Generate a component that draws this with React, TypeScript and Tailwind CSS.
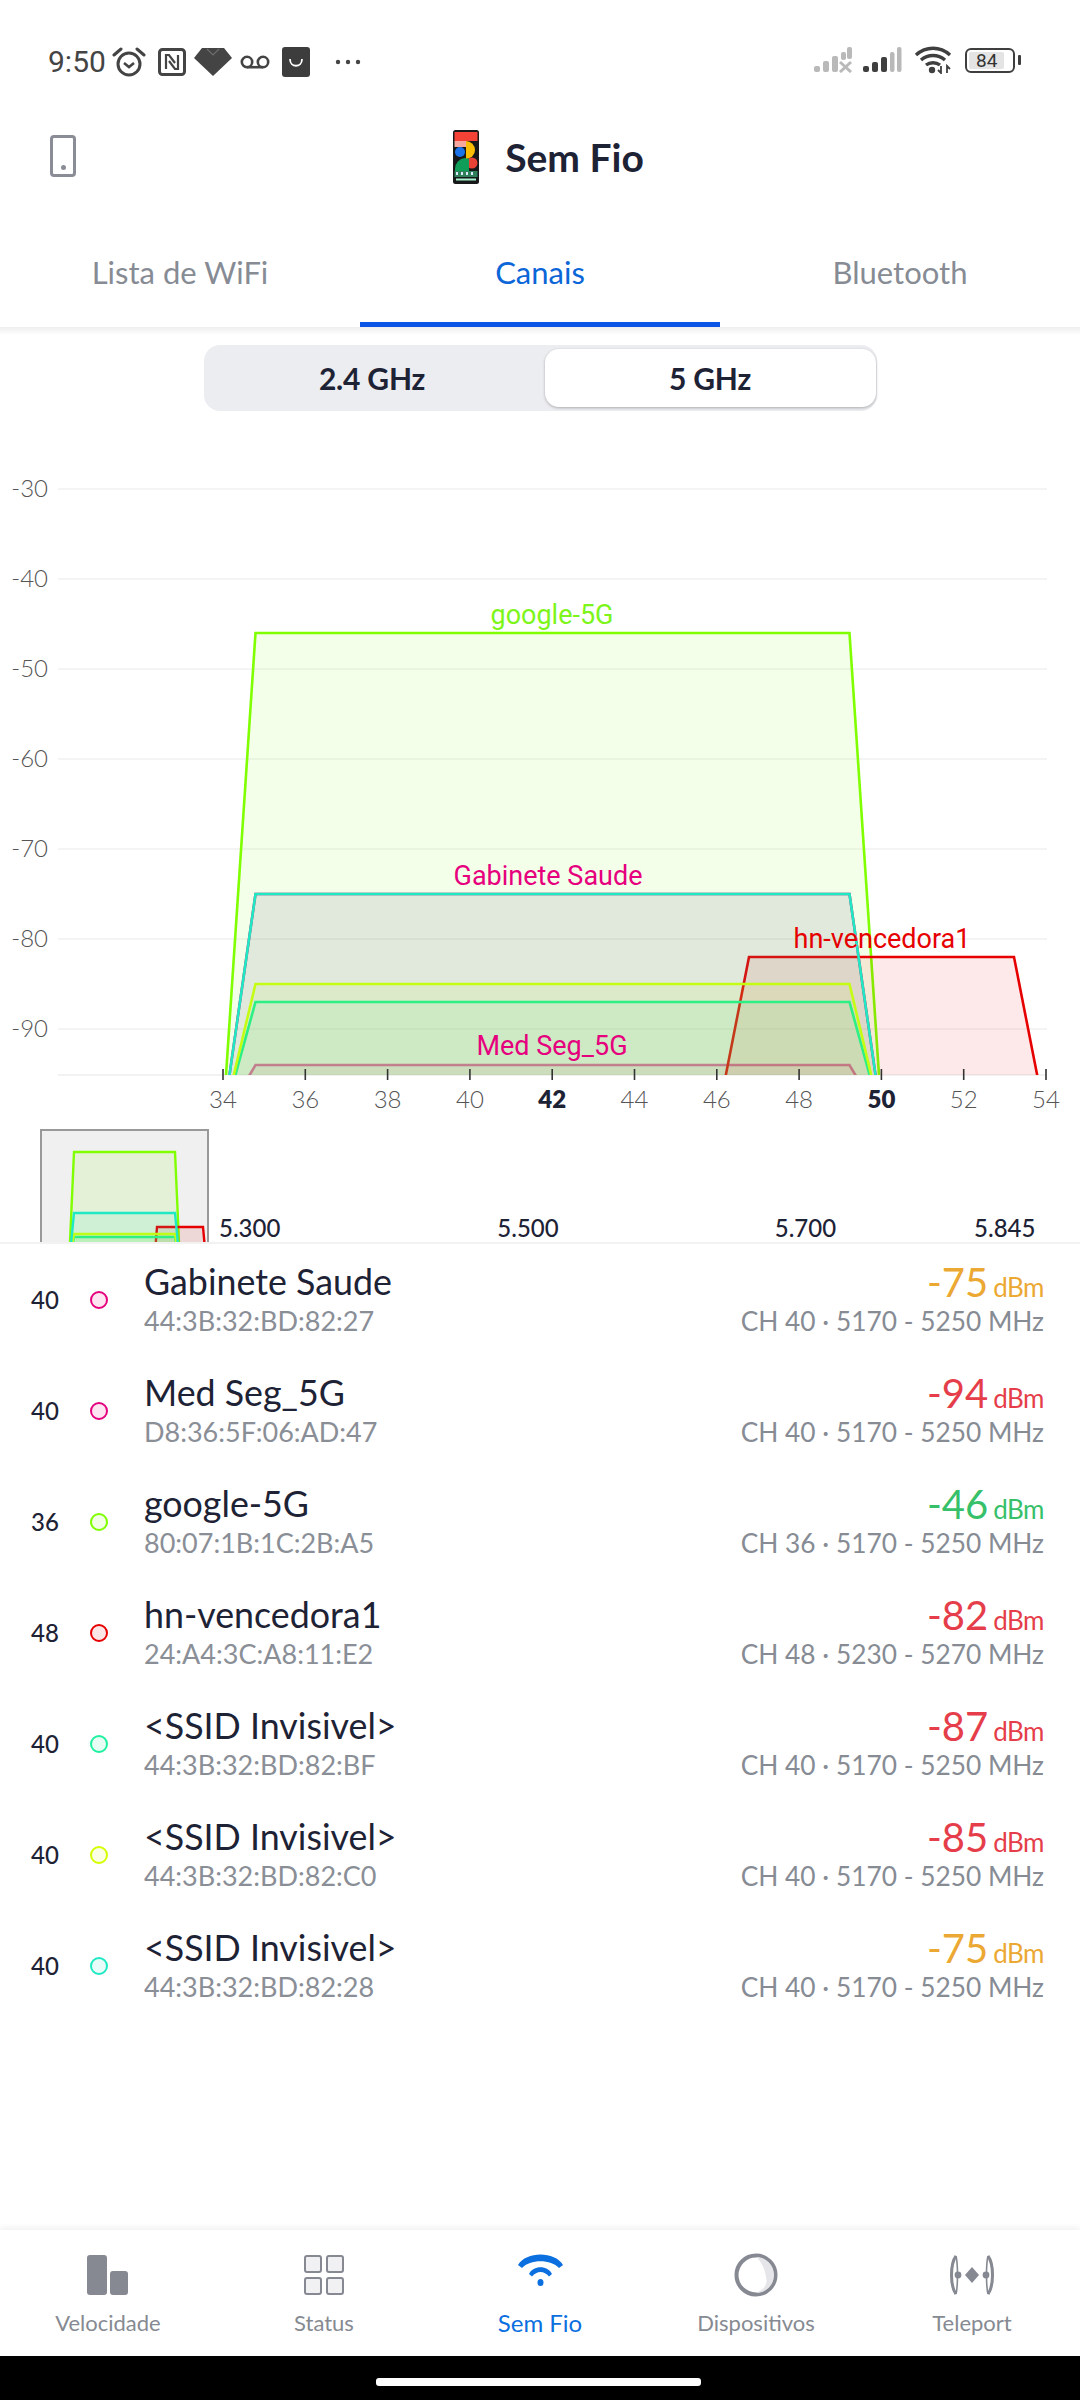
import React from "react";

const C = {
  mag: "#e6007e",
  lime: "#7fff00",
  red: "#e60000",
  green: "#1ff08c",
  yellow: "#d4ff00",
  teal: "#1fe8c4",
};

const yOf = (dbm: number) => 489 + (-30 - dbm) * 9;

const traps = [
  { x0: 223, x1: 255.5, x2: 849.5, x3: 882, dbm: -75, color: C.mag },
  { x0: 223, x1: 255.5, x2: 849.5, x3: 882, dbm: -94, color: C.mag },
  { x0: 223, x1: 255.5, x2: 849.5, x3: 882, dbm: -46, color: C.lime },
  { x0: 717, x1: 749, x2: 1014, x3: 1046, dbm: -82, color: C.red },
  { x0: 223, x1: 255.5, x2: 849.5, x3: 882, dbm: -87, color: C.green },
  { x0: 223, x1: 255.5, x2: 849.5, x3: 882, dbm: -85, color: C.yellow },
  { x0: 223, x1: 255.5, x2: 849.5, x3: 882, dbm: -75, color: C.teal },
];

const grid = [-30, -40, -50, -60, -70, -80, -90];
const ticks = [34, 36, 38, 40, 42, 44, 46, 48, 50, 52, 54];

function Chart() {
  return (
    <svg viewBox="0 411 1080 718" className="block w-[1080px] h-[718px]">
      <defs>
        <clipPath id="plot">
          <rect x="0" y="411" width="1080" height="664" />
        </clipPath>
      </defs>
      {grid.map((g) => (
        <g key={g}>
          <line x1="58" x2="1047" y1={yOf(g)} y2={yOf(g)} stroke="#f4f4f4" strokeWidth="2" />
          <text x="48" y={yOf(g) + 8} textAnchor="end" fontFamily="Lato" fontWeight="300" fontSize="24" fill="#555">
            {g}
          </text>
        </g>
      ))}
      <line x1="58" x2="1047" y1="1075" y2="1075" stroke="#f2f2f2" strokeWidth="2" />
      <g clipPath="url(#plot)">
        {traps.map((t, i) => (
          <polygon
            key={i}
            points={`${t.x0},1120 ${t.x1},${yOf(t.dbm)} ${t.x2},${yOf(t.dbm)} ${t.x3},1120`}
            fill={t.color}
            fillOpacity="0.085"
            stroke={t.color}
            strokeOpacity={t.dbm === -94 ? 0.65 : 1}
            strokeWidth="2.6"
          />
        ))}
      </g>
      <g fontFamily="Roboto" fontSize="27" textAnchor="middle">
        <text x="552" y="624" fill="#7df51a">google-5G</text>
        <text x="548" y="885" fill={C.mag}>Gabinete Saude</text>
        <text x="882" y="948" fill={C.red}>hn-vencedora1</text>
        <text x="552" y="1055" fill={C.mag}>Med Seg_5G</text>
      </g>
      {ticks.map((t) => {
        const x = 223 + ((t - 34) / 2) * 82.3;
        const bold = t === 42 || t === 50;
        return (
          <g key={t}>
            <line x1={x} x2={x} y1="1069" y2="1080" stroke="#333" strokeWidth="1.6" />
            <text
              x={x}
              y="1108"
              textAnchor="middle"
              fontFamily="Lato"
              fontWeight={bold ? 800 : 300}
              fontSize="24"
              fill={bold ? "#1e2235" : "#555"}
            >
              {t}
            </text>
          </g>
        );
      })}
    </svg>
  );
}

function MiniMap() {
  const shapes = [
    { b: [69, 180], t: [74, 175], y: 1152, c: C.lime },
    { b: [154, 206.5], t: [157, 203], y: 1227, c: C.red },
    { b: [69, 180], t: [74, 175], y: 1237, c: C.green },
    { b: [69, 180], t: [74, 175], y: 1234, c: C.yellow },
    { b: [69, 180], t: [74, 175], y: 1213, c: C.teal },
  ];
  return (
    <div className="w-[169px] h-[114px] border-2 border-b-0 border-[#999999] bg-[#f0f0f0] overflow-hidden">
      <svg viewBox="42 1131 165 112" className="block w-[165px] h-[112px]">
        {shapes.map((s, i) => (
          <polygon
            key={i}
            points={`${s.b[0]},1265 ${s.t[0]},${s.y} ${s.t[1]},${s.y} ${s.b[1]},1265`}
            fill={s.c}
            fillOpacity="0.1"
            stroke={s.c}
            strokeWidth="2.4"
          />
        ))}
      </svg>
    </div>
  );
}

const rows = [
  { ch: "40", name: "Gabinete Saude", mac: "44:3B:32:BD:82:27", dbm: "-75", col: "text-[#eba833]", dot: "border-[#e6007e] bg-[#fde6f2]", info: "CH 40 · 5170 - 5250 MHz" },
  { ch: "40", name: "Med Seg_5G", mac: "D8:36:5F:06:AD:47", dbm: "-94", col: "text-[#e53e4a]", dot: "border-[#e6007e] bg-[#fde6f2]", info: "CH 40 · 5170 - 5250 MHz" },
  { ch: "36", name: "google-5G", mac: "80:07:1B:1C:2B:A5", dbm: "-46", col: "text-[#37c06a]", dot: "border-[#7fff00] bg-[#f2ffe6]", info: "CH 36 · 5170 - 5250 MHz" },
  { ch: "48", name: "hn-vencedora1", mac: "24:A4:3C:A8:11:E2", dbm: "-82", col: "text-[#e53e4a]", dot: "border-[#e60000] bg-[#fde6e6]", info: "CH 48 · 5230 - 5270 MHz" },
  { ch: "40", name: "<SSID Invisivel>", mac: "44:3B:32:BD:82:BF", dbm: "-87", col: "text-[#e53e4a]", dot: "border-[#1ff0a0] bg-[#e8fdf4]", info: "CH 40 · 5170 - 5250 MHz" },
  { ch: "40", name: "<SSID Invisivel>", mac: "44:3B:32:BD:82:C0", dbm: "-85", col: "text-[#e53e4a]", dot: "border-[#d4ff00] bg-[#fbffe6]", info: "CH 40 · 5170 - 5250 MHz" },
  { ch: "40", name: "<SSID Invisivel>", mac: "44:3B:32:BD:82:28", dbm: "-75", col: "text-[#eba833]", dot: "border-[#1fe8c4] bg-[#e8fdf9]", info: "CH 40 · 5170 - 5250 MHz" },
];

function StatusLeft() {
  return (
    <div className="flex items-center">
      <span className="font-['Roboto',sans-serif] text-[30px] leading-none text-[#444444] w-[64px]">9:50</span>
      <svg width="34" height="32" viewBox="0 0 34 32" className="text-[#444444]">
        <circle cx="17" cy="18" r="11" fill="none" stroke="currentColor" strokeWidth="3" />
        <path d="M12 17l5 4 5-4" fill="none" stroke="currentColor" strokeWidth="2.6" />
        <path d="M2 9l7-6M32 9l-7-6" stroke="currentColor" strokeWidth="3" strokeLinecap="round" />
      </svg>
      <svg width="28" height="28" viewBox="0 0 28 28" className="ml-[12px]">
        <rect x="1.5" y="1.5" width="25" height="25" rx="3" fill="none" stroke="#444444" strokeWidth="3" />
        <path d="M8 21V7h3l6 8M20 7v14h-3l-6-8" fill="none" stroke="#444444" strokeWidth="2.2" />
      </svg>
      <svg width="38" height="28" viewBox="0 0 38 28" className="ml-[8px]">
        <path d="M8 0h22l8 10-19 18L0 10z" fill="#444444" />
        <path d="M13 1l6 6 6-6" fill="none" stroke="#6d6d6d" strokeWidth="1.2" />
      </svg>
      <svg width="30" height="14" viewBox="0 0 30 14" className="ml-[8px]">
        <circle cx="7" cy="7" r="5.2" fill="none" stroke="#444444" strokeWidth="2.6" />
        <circle cx="23" cy="7" r="5.2" fill="none" stroke="#444444" strokeWidth="2.6" />
        <path d="M7 12.2h16" stroke="#444444" strokeWidth="2.6" />
      </svg>
      <svg width="28" height="30" viewBox="0 0 28 30" className="ml-[12px]">
        <rect width="28" height="30" rx="3" fill="#3d3d3d" />
        <path d="M8 12c0 9 12 9 12 0" fill="none" stroke="#ffffff" strokeWidth="1.8" />
      </svg>
      <svg width="26" height="6" viewBox="0 0 26 6" className="ml-[25px]">
        <circle cx="3" cy="3" r="2.2" fill="#444444" />
        <circle cx="13" cy="3" r="2.2" fill="#444444" />
        <circle cx="23" cy="3" r="2.2" fill="#444444" />
      </svg>
    </div>
  );
}

function StatusRight() {
  const bar = "#b9b9b9";
  const dark = "#3f3f3f";
  return (
    <div className="flex items-center">
      <svg width="39" height="26" viewBox="0 0 39 26">
        <rect x="0" y="19" width="6" height="6" rx="2" fill={bar} />
        <rect x="9" y="14" width="6" height="11" rx="2" fill={bar} />
        <rect x="18" y="9" width="6" height="16" rx="2" fill={bar} />
        <rect x="27" y="5" width="5" height="8" rx="2" fill={bar} />
        <rect x="33" y="0" width="5" height="12" rx="2" fill={bar} />
        <path d="M26 15l11 10M37 15L26 25" stroke={bar} strokeWidth="3" />
      </svg>
      <svg width="39" height="26" viewBox="0 0 39 26" className="ml-[10px]">
        <rect x="0" y="19" width="6" height="6" rx="2" fill={dark} />
        <rect x="9" y="15" width="6" height="10" rx="2" fill={dark} />
        <rect x="18" y="10" width="6" height="15" rx="2" fill={dark} />
        <rect x="27" y="5" width="4.5" height="20" rx="2" fill={bar} />
        <rect x="34" y="0" width="4.5" height="25" rx="2" fill={bar} />
      </svg>
      <svg width="38" height="28" viewBox="0 0 38 28" className="ml-[12px]">
        <path d="M2 9c10-9 24-9 34 0M7 14c7-6 17-6 24 0M12 19c4-3 10-3 14 0" fill="none" stroke={dark} strokeWidth="3.4" />
        <circle cx="18" cy="24" r="3.2" fill={dark} />
        <path d="M27 20v7l-3-3M33 27v-7l3 3" fill="none" stroke={dark} strokeWidth="1.8" />
      </svg>
      <div className="ml-[13px] flex items-center">
        <div className="w-[50px] h-[25px] rounded-[6px] border-2 border-[#3f3f3f] p-[2px] flex">
          <div className="w-[84%] bg-[#e4e4e4] rounded-[2px] flex items-center justify-center font-['Roboto',sans-serif] text-[19px] leading-none text-[#333333]">
            84
          </div>
        </div>
        <div className="ml-[3px] w-[3px] h-[10px] rounded-[1px] bg-[#3f3f3f]" />
      </div>
    </div>
  );
}

function PixelPhone() {
  return (
    <svg width="26" height="54" viewBox="0 0 26 54">
      <rect width="26" height="54" rx="2.5" fill="#17181a" />
      <rect x="1.5" y="2" width="23" height="9" fill="#f44336" />
      <rect x="1.5" y="11" width="12" height="6" fill="#f6a79e" />
      <path d="M13 11a9 9 0 0 1 0 18z" fill="#fbbc04" />
      <circle cx="7" cy="22" r="5" fill="#1a73e8" />
      <circle cx="19" cy="33" r="5.5" fill="#ea4335" />
      <path d="M12 28a11 11 0 0 0-10 11v3h14v-13z" fill="#0f9d58" />
      <rect x="1.5" y="41" width="23" height="6" fill="#2f7f58" />
      <path d="M3 42h2v3H3zM8 42h2v3H8zM13 42h2v3h-2zM18 42h2v3h-2z" fill="#dbeafe" />
      <rect x="3" y="48.5" width="20" height="2" fill="#a7f3d0" />
    </svg>
  );
}

function NavItem({ label, active, children }: { label: string; active?: boolean; children: React.ReactNode }) {
  return (
    <div className="flex flex-col items-center">
      <div className="h-[44px] flex items-center justify-center">{children}</div>
      <span className={`mt-[12px] leading-[28px] ${active ? "text-[24px] text-[#0b6fe0]" : "text-[22px] text-[#868a92]"}`}>{label}</span>
    </div>
  );
}

export default function App() {
  return (
    <div className="w-[1080px] h-[2400px] bg-white flex flex-col overflow-hidden font-['Lato',sans-serif]">
      {/* status bar */}
      <div className="h-[90px] shrink-0 flex items-start justify-between pt-[46px] pl-[48px] pr-[59px]">
        <StatusLeft />
        <StatusRight />
      </div>

      {/* header */}
      <div className="relative h-[134px] shrink-0 flex items-center justify-center">
        <div className="absolute left-[50px] top-[45px] w-[26px] h-[42px] rounded-[4px] border-[3px] border-[#8b8d96] flex items-end justify-center pb-[4px]">
          <div className="w-[5px] h-[5px] rounded-full bg-[#8b8d96]" />
        </div>
        <div className="flex items-center gap-[26px] ml-[17px]">
          <PixelPhone />
          <span className="text-[39px] font-bold leading-none text-[#1e2235]">Sem Fio</span>
        </div>
      </div>

      {/* tabs */}
      <div className="relative h-[103px] shrink-0 grid grid-cols-3">
        <div className="flex items-start justify-center pt-[29px] text-[31px] leading-[38px] text-[#868b94]">Lista de WiFi</div>
        <div className="flex items-start justify-center pt-[29px] text-[31px] leading-[38px] text-[#0b66d8] border-b-[5px] border-[#0a55e6]">Canais</div>
        <div className="flex items-start justify-center pt-[29px] text-[31px] leading-[38px] text-[#868b94]">Bluetooth</div>
      </div>

      {/* segmented */}
      <div className="shrink-0 h-[84px] flex justify-center pt-[18px] bg-gradient-to-b from-[#eeeeee] via-white via-[8px] to-white">
        <div className="w-[673px] h-[66px] rounded-[16px] bg-[#ecedf0] flex p-[4px] pr-[1px]">
          <div className="w-[329px] flex items-center justify-center text-[30px] font-bold tracking-[-0.2px] text-[#1e2235]">2.4 GHz</div>
          <div className="ml-[8px] flex-1 rounded-[14px] bg-white shadow-[0_1px_3px_rgba(0,0,0,0.28)] flex items-center justify-center text-[30px] font-bold tracking-[-0.2px] text-[#1e2235]">5 GHz</div>
        </div>
      </div>

      <div className="shrink-0">
        <Chart />
      </div>

      {/* overview */}
      <div className="shrink-0 h-[115px] border-b-2 border-[#f2f2f2] pl-[40px] flex overflow-hidden">
        <MiniMap />
        <div className="flex items-start pt-[84px] text-[24px] leading-[30px] font-medium text-[#1e2235]">
          <span className="ml-[10px]">5.300</span>
          <span className="ml-[217px]">5.500</span>
          <span className="ml-[216px]">5.700</span>
          <span className="ml-[138px]">5.845</span>
        </div>
      </div>

      {/* list */}
      <div className="flex-1">
        {rows.map((r, i) => (
          <div key={i} className="h-[111px] flex items-start pt-[18px] pl-[31px] pr-[36px]">
            <div className="w-[28px] mt-[23px] text-[24px] leading-[30px] font-medium text-[#1e2235]">{r.ch}</div>
            <div className={`ml-[31px] mt-[29px] w-[18px] h-[18px] rounded-full border-2 ${r.dot}`} />
            <div className="ml-[36px] flex-1">
              <div className="text-[35.8px] leading-[40px] text-[#1e2235]">{r.name}</div>
              <div className="mt-[2px] text-[27px] leading-[34px] text-[#8a8e96]">{r.mac}</div>
            </div>
            <div className="flex flex-col items-end">
              <div className={`h-[40px] leading-[40px] ${r.col}`}>
                <span className="text-[40px]">{r.dbm}</span>
                <span className="ml-[5px] text-[26px] tracking-[-0.5px]">dBm</span>
              </div>
              <div className="mt-[2px] text-[26.3px] leading-[34px] text-[#868b94]">{r.info}</div>
            </div>
          </div>
        ))}
      </div>

      {/* bottom nav */}
      <div className="shrink-0 h-[126px] bg-white grid grid-cols-5 pt-[23px] shadow-[0_-3px_6px_rgba(0,0,0,0.05)]">
        <NavItem label="Velocidade">
          <svg width="42" height="40" viewBox="0 0 42 40">
            <rect x="0" y="0" width="20" height="40" rx="3" fill="#868892" />
            <rect x="23" y="16" width="18" height="24" rx="3" fill="#868892" />
          </svg>
        </NavItem>
        <NavItem label="Status">
          <svg width="40" height="40" viewBox="0 0 40 40">
            {[[1, 1], [23, 1], [1, 23], [23, 23]].map(([x, y]) => (
              <rect key={`${x}-${y}`} x={x} y={y} width="16" height="16" rx="2" fill="#f1f1f4" stroke="#868892" strokeWidth="2" />
            ))}
          </svg>
        </NavItem>
        <NavItem label="Sem Fio" active>
          <svg width="45" height="32" viewBox="0 0 45 32" className="self-start mt-[1px]">
            <path d="M0 11C8 -3 37 -3 45 11L41 14C33 5 12 5 4 14Z" fill="#0b6fe0" />
            <path d="M11 20C15 11 30 11 34 20L31 22.5C26 16.5 19 16.5 14 22.5Z" fill="#0b6fe0" />
            <ellipse cx="22.5" cy="28.5" rx="3" ry="3.5" fill="#0b6fe0" />
          </svg>
        </NavItem>
        <NavItem label="Dispositivos">
          <svg width="44" height="44" viewBox="0 0 44 44">
            <circle cx="22" cy="22" r="19.5" fill="#ffffff" stroke="#868892" strokeWidth="4" />
            <path d="M22 4a18 18 0 0 1 0 36c8-3 12-9 10-16C31 16 27 8 22 4z" fill="#e6e6ea" />
          </svg>
        </NavItem>
        <NavItem label="Teleport">
          <svg width="46" height="40" viewBox="0 0 46 40">
            <path d="M7 1C1 9 1 31 7 39M39 1c6 8 6 30 0 38" fill="none" stroke="#868892" strokeWidth="3" />
            <path d="M7 1c2 8 2 30 0 38M39 1c-2 8-2 30 0 38" fill="none" stroke="#868892" strokeWidth="1.6" />
            <path d="M23 12l7 8-7 8-7-8z" fill="#868892" />
            <circle cx="9" cy="20" r="3.4" fill="#868892" />
            <circle cx="37" cy="20" r="3.4" fill="#868892" />
          </svg>
        </NavItem>
      </div>

      {/* gesture bar */}
      <div className="shrink-0 h-[44px] bg-black flex items-start justify-center pt-[22px]">
        <div className="w-[325px] h-[8px] rounded-[3px] bg-white -ml-[3px]" />
      </div>
    </div>
  );
}
